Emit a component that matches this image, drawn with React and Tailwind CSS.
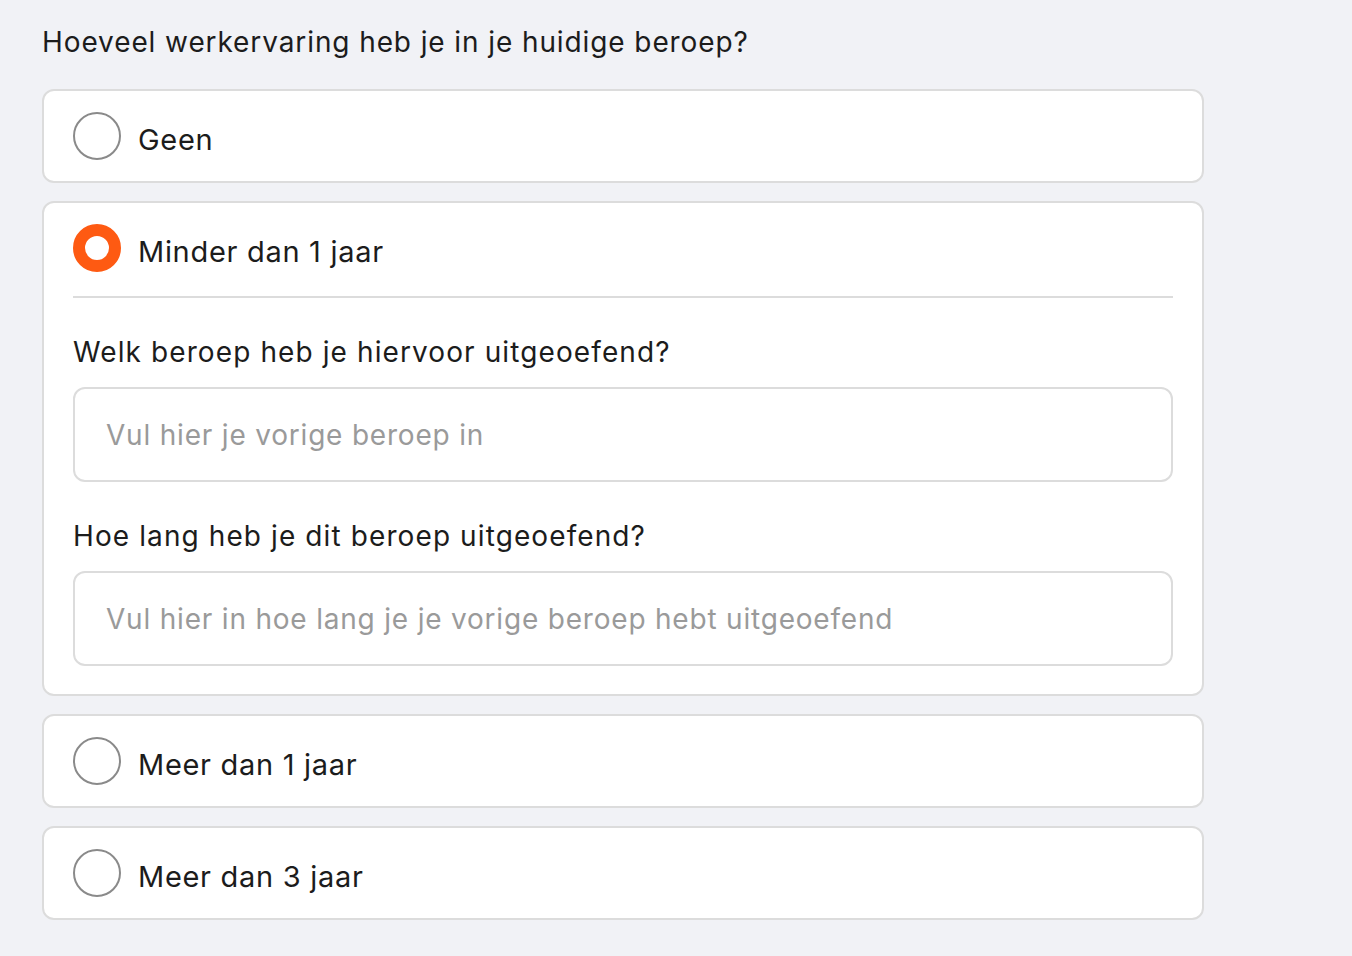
const options = [
  { label: 'Geen' },
  { label: 'Minder dan 1 jaar', selected: true },
  { label: 'Meer dan 1 jaar' },
  { label: 'Meer dan 3 jaar' },
]

function Radio({ checked }) {
  return checked ? (
    <div className="w-12 h-12 rounded-full border-[12px] border-[#fe5a12] bg-white shrink-0" />
  ) : (
    <div className="w-12 h-12 rounded-full border-2 border-[#8a8a8a] bg-white shrink-0" />
  )
}

function Field({ label, placeholder }) {
  return (
    <div className="flex flex-col gap-[17px]">
      <p className="text-[28px] leading-[36px] tracking-[1.1px] text-[#1c1c1c]">{label}</p>
      <input
        placeholder={placeholder}
        className="h-[95px] w-full rounded-xl border-2 border-[#dcdcdc] bg-white px-[31px] text-[28px] tracking-[0.8px] text-[#1c1c1c] placeholder:text-[#9a9a9a] outline-none"
      />
    </div>
  )
}

export default function App() {
  return (
    <div className="min-h-screen bg-[#f1f2f6] pl-[42px] pt-[22px]" style={{ fontFamily: 'Inter, "Noto Sans", sans-serif' }}>
      <h1 className="text-[28px] leading-[40px] tracking-[0.9px] text-[#1c1c1c] mb-[27px]">
        Hoeveel werkervaring heb je in je huidige beroep?
      </h1>
      <div className="w-[1162px] flex flex-col gap-[18px]">
        {options.map(opt => (
          <div key={opt.label} className="rounded-xl border-2 border-[#dcdcdc] bg-white px-[29px]">
            <div className="flex items-center gap-[17px] h-[90px]">
              <Radio checked={opt.selected} />
              <span className="mt-[8px] text-[29px] tracking-[0.7px] text-[#1c1c1c]">{opt.label}</span>
            </div>
            {opt.selected && (
              <div className="mt-[3px] border-t-2 border-[#dcdcdc] pt-[36px] pb-[28px] flex flex-col gap-[36px]">
                <Field label="Welk beroep heb je hiervoor uitgeoefend?" placeholder="Vul hier je vorige beroep in" />
                <Field label="Hoe lang heb je dit beroep uitgeoefend?" placeholder="Vul hier in hoe lang je je vorige beroep hebt uitgeoefend" />
              </div>
            )}
          </div>
        ))}
      </div>
    </div>
  )
}
